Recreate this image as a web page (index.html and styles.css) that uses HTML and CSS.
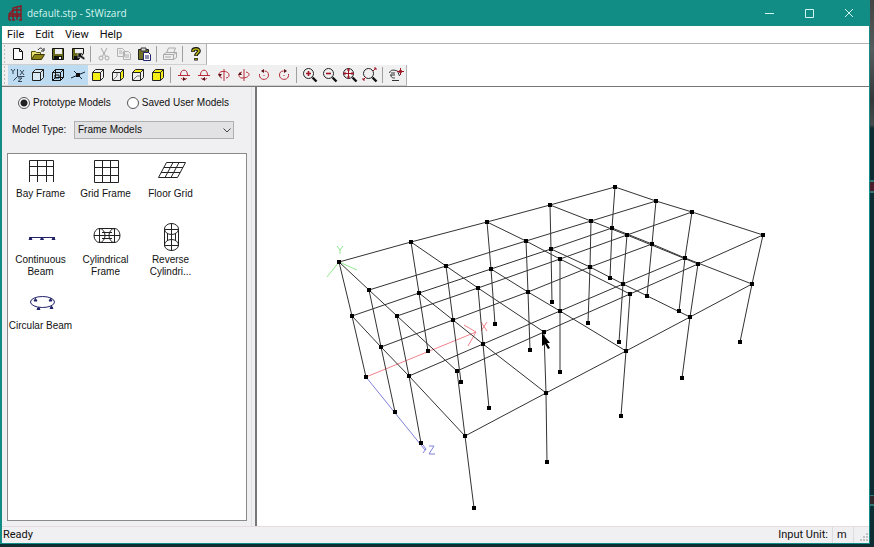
FILE: index.html
```html
<!DOCTYPE html>
<html lang="en">
<head>
<meta charset="utf-8">
<title>default.stp - StWizard</title>
<link rel="stylesheet" href="styles.css">
</head>
<body>
<svg class="defs" aria-hidden="true">
  <symbol id="cube" viewBox="0 0 16 16">
    <path d="M2.500 5.500h8v8h-8zM2.500 5.500l3-3h8v8l-3 3M10.500 5.500l3-3"/>
  </symbol>
  <symbol id="lens" viewBox="0 0 16 16">
    <circle cx="6.500" cy="6.500" r="5" fill="none" stroke="#222"/>
    <path d="M10.500 10.500l4 4" stroke="#111" stroke-width="2.400" fill="none"/>
  </symbol>
</svg>
<div class="window">
  <header class="titlebar">
    <svg class="app-icon" viewBox="0 0 16 16"><path d="M2 15V9l4-4V3l8-2v14M2 9h12M6 5h8M6 15V5M10 15V2M2 11h12M2 15h2M5 15h3M12 15h3" fill="none" stroke="#8c1622" stroke-width="1.400"/></svg>
    <h1>default.stp - StWizard</h1>
    <button class="win-btn" aria-label="Minimize"><svg viewBox="0 0 10 10"><path d="M1 5.500h9"/></svg></button>
    <button class="win-btn" aria-label="Maximize"><svg viewBox="0 0 10 10"><path d="M1.500 1.500h8v8h-8z"/></svg></button>
    <button class="win-btn" aria-label="Close"><svg viewBox="0 0 10 10"><path d="M1 1l8 8M9 1l-8 8"/></svg></button>
  </header>
  <nav class="menubar">
    <button>File</button><button>Edit</button><button>View</button><button>Help</button>
  </nav>
  <div class="toolbars">
    <div class="toolbar">
      <button aria-label="New"><svg viewBox="0 0 16 16"><path d="M3.500 2.500h6l3 3v8h-9zM9.500 2.500v3h3" fill="#fff" stroke="#111"/></svg></button>
      <button aria-label="Open"><svg viewBox="0 0 16 16"><path d="M1.500 13V5.500h4l1 1h4V8" fill="#e8e070" stroke="#55500a"/><path d="M1.500 13.500l3-5h10l-3 5z" fill="#8d8515" stroke="#38340a"/><path d="M8 4c2-3 4-2 5 0M14 2v3h-3" fill="none" stroke="#222"/></svg></button>
      <button aria-label="Save"><svg viewBox="0 0 16 16"><path d="M2.500 2.500h11v11h-11z" fill="#69691b" stroke="#111"/><path d="M5 3h7v5H5z" fill="#eee"/><path d="M4 10h8v4H4z" fill="#111"/><path d="M9 11h2v2H9z" fill="#fff"/></svg></button>
      <button aria-label="Save and exit"><svg viewBox="0 0 16 16"><path d="M2.500 2.500h11v5l-5 6h-6z" fill="#69691b" stroke="#111"/><path d="M5 3h8v4H5z" fill="#eee"/><path d="M4 10h5v4H4z" fill="#111"/><path d="M8 12V7h5l-2 2 4 3-1 2-4-3z" fill="#111" stroke="#ddd" stroke-width=".6"/></svg></button>
      <i class="sep"></i>
      <button aria-label="Cut"><svg viewBox="0 0 16 16"><path d="M5 2l5 9M11 2l-5 9" fill="none" stroke="#aaa"/><circle cx="5" cy="12" r="2" fill="none" stroke="#aaa"/><circle cx="11" cy="12" r="2" fill="none" stroke="#aaa"/></svg></button>
      <button aria-label="Copy"><svg viewBox="0 0 16 16"><path d="M1.500 2.500h5l2 2v6h-7zM7.500 5.500h5l2 2v6h-7zM3 5h3M3 7h4M9 9h4M9 11h4" fill="#eee" stroke="#b2b2b2"/></svg></button>
      <button aria-label="Paste"><svg viewBox="0 0 16 16"><path d="M2.500 3.500h10v10h-10z" fill="#737327" stroke="#222"/><path d="M5 2h5v3H5z" fill="#ddd" stroke="#333"/><path d="M7.500 6.500h5l2 2v6h-7z" fill="#fff" stroke="#22226f"/><path d="M9 10h4M9 12h4" stroke="#22226f"/></svg></button>
      <i class="sep"></i>
      <button aria-label="Print"><svg viewBox="0 0 16 16"><path d="M4.500 7l2-5h7l-2 5M1.500 8.500l3-2h10v5l-3 2h-10zM1.500 8.500h10v5M11.500 8.500l3-2M3 11h6" fill="#eee" stroke="#aaa"/></svg></button>
      <i class="sep"></i>
      <button aria-label="About"><svg viewBox="0 0 16 16"><path d="M5 6V4.500C5 2 11 2 11 5 11 7 8 7 8 10M8 12v2.500" fill="none" stroke="#111" stroke-width="3.600"/><path d="M5 5.500V4.500C5 2.500 11 2.500 11 5 11 7 8 7 8 9.500M8 12.500v1.500" fill="none" stroke="#b6b312" stroke-width="1.600"/></svg></button>
    </div>
    <div class="toolbar">
      <button class="on" aria-label="Axes"><svg viewBox="0 0 16 16"><path d="M7.500 2v7.500h7M7.500 9.500l-4 4M1 2l2 2.500L5 2M3 4.500V7M10 3l4 5M14 3l-4 5M8 11h4l-4 3.500h4" fill="none" stroke="#345"/></svg></button>
      <button class="on" aria-label="Outline"><svg viewBox="0 0 16 16" fill="#d7e9f5" stroke="#222"><use href="#cube"/></svg></button>
      <button class="on" aria-label="Wireframe"><svg viewBox="0 0 16 16" fill="none" stroke="#111"><use href="#cube"/><path d="M5.500 2.500v8h8M5.500 10.500l-3 3M5 8h4v3H5z"/></svg></button>
      <button class="on" aria-label="Nodes"><svg viewBox="0 0 16 16"><path d="M1 11l14-6M4 4l8 8" fill="none" stroke="#123"/><path d="M6 6h4v4H6z" fill="#111"/></svg></button>
      <button aria-label="Front view"><svg viewBox="0 0 16 16" fill="none" stroke="#222"><path d="M3 6h7v7H3z" fill="#f2ee16" stroke="none"/><use href="#cube"/></svg></button>
      <button aria-label="Side view"><svg viewBox="0 0 16 16" fill="none" stroke="#222"><path d="M10.500 5.500l3-3v8l-3 3z" fill="#f2ee16" stroke="none"/><use href="#cube"/><path d="M3 13l4-4V6" stroke="#777"/></svg></button>
      <button aria-label="Top view"><svg viewBox="0 0 16 16" fill="none" stroke="#222"><path d="M2.500 5.500l3-3h8l-3 3z" fill="#f2ee16" stroke="none"/><use href="#cube"/><path d="M3 13l4-4h3" stroke="#777"/></svg></button>
      <button aria-label="Isometric view"><svg viewBox="0 0 16 16" fill="#f2ee16" stroke="#222"><use href="#cube"/></svg></button>
      <i class="sep"></i>
      <button aria-label="Rotate up"><svg viewBox="0 0 16 16" class="rot"><path d="M2 8.500h12M4.500 8C4.500 1.500 11.500 1.500 11.500 8M5 11c1 2 5 2 6 0"/><path class="tip" d="M7 10v4l3-2z"/></svg></button>
      <button aria-label="Rotate down"><svg viewBox="0 0 16 16" class="rot"><path d="M2 8.500h12M4.500 8C4.500 1.500 11.500 1.500 11.500 8M5 11c1 2 5 2 6 0"/><path class="tip" d="M9 10v4l-3-2z"/></svg></button>
      <button aria-label="Rotate left"><svg viewBox="0 0 16 16" class="rot"><path d="M8 2v12M6 4.500C2 5 2 10 6 11M6 4.500c8-1 9 6 4 6.500"/><path class="tip" d="M2 7h4L4 10z"/></svg></button>
      <button aria-label="Rotate right"><svg viewBox="0 0 16 16" class="rot"><path d="M8 2v12M6 5C2 6 2 11 6 11M10 5c5 1 4 6-4 6"/><path class="tip" d="M2 8h4L4 5z"/></svg></button>
      <button aria-label="Spin left"><svg viewBox="0 0 16 16" class="rot"><path d="M3.500 7c-1 7 9 7 9 1 0-2-1-4-4-4M8 8v1"/><path class="tip" d="M8 2v4L5 4z"/></svg></button>
      <button aria-label="Spin right"><svg viewBox="0 0 16 16" class="rot"><path d="M12.500 7c1 7-9 7-9 1 0-2 1-4 4-4M8 8v1"/><path class="tip" d="M8 2v4l3-2z"/></svg></button>
      <i class="sep"></i>
      <button aria-label="Zoom in"><svg viewBox="0 0 16 16"><use href="#lens"/><path d="M4 6.500h5M6.500 4v5" stroke="#a01525" stroke-width="1.600"/></svg></button>
      <button aria-label="Zoom out"><svg viewBox="0 0 16 16"><use href="#lens"/><path d="M4 6.500h5" stroke="#a01525" stroke-width="1.600"/></svg></button>
      <button aria-label="Zoom extents"><svg viewBox="0 0 16 16"><use href="#lens"/><path d="M1 6.500h11M6.500 1v11" stroke="#a01525"/><path d="M3 5v3M10 5v3M5 3h3M5 10h3" stroke="#a01525"/></svg></button>
      <button aria-label="Zoom window"><svg viewBox="0 0 16 16"><use href="#lens"/><path d="M11 4l3-3M12 1h2v2M4 10l-3 3M1 11v2h2" stroke="#a01525" fill="none"/></svg></button>
      <i class="sep"></i>
      <button aria-label="Pan"><svg viewBox="0 0 16 16"><path d="M1.500 6c1-4 5-3 8-2l2 5M3 6h4M2 8h5M3 8c0 3 2 3 4 3M4 13.500h7" fill="none" stroke="#333"/><path d="M12.500 1v7M9 4.500h7M11.500 3.500h2v2h-2z" fill="none" stroke="#a01525"/></svg></button>
    </div>
  </div>
  <main class="workspace">
    <aside class="panel">
      <div class="radios">
        <label><input type="radio" name="source" checked>Prototype Models</label>
        <label><input type="radio" name="source">Saved User Models</label>
      </div>
      <div class="type-row">
        <label for="model-type">Model Type:</label>
        <div class="select-box">
          <select id="model-type"><option>Frame Models</option></select>
          <svg viewBox="0 0 8 5"><path d="M.5.5L4 4 7.500.5" fill="none" stroke="#444"/></svg>
        </div>
      </div>
      <ul class="models">
        <li><svg viewBox="0 0 32 28"><path d="M4.500 25V3.500h24V25M4 9.500h25M4 18.500h25M12.500 3v22M21.500 3v22"/></svg>Bay Frame</li>
        <li><svg viewBox="0 0 32 28"><path d="M4.500 3.500h24v22h-24zM4 10.500h25M4 18.500h25M12.500 3v23M20.500 3v23"/></svg>Grid Frame</li>
        <li><svg viewBox="0 0 32 28"><path d="M11.500 5.500h19l-8 15h-19zM9 10.500h19M6 15.500h19M18 5.500l-8 15M24 5.500l-8 15"/></svg>Floor Grid</li>
        <li><svg viewBox="0 0 32 28" class="navy"><path d="M4 14.500h26"/><path d="M4 16.500L5.500 14l1.500 2.500zM15.500 16.500L17 14l1.500 2.500zM27 16.500l1.500-2.500 1.500 2.500z" fill="#22226a"/></svg>Continuous<br>Beam</li>
        <li><svg viewBox="0 0 32 28"><path d="M9 5.500h16M9 19.500h16M4 12.500h26M12 9.500h10M12 15.500h10M9.500 5v15M24.500 5v15"/><ellipse cx="9.500" cy="12.500" rx="5.500" ry="7"/><ellipse cx="24.500" cy="12.500" rx="5.500" ry="7"/></svg>Cylindrical<br>Frame</li>
        <li><svg viewBox="0 0 32 28"><path d="M9.500 6v16M23.500 6v16M16.500 0v28M9 6.500h15M9 22.500h15M12.500 10v8M20.500 10v8"/><ellipse cx="16.500" cy="6" rx="7" ry="5.500"/><ellipse cx="16.500" cy="22" rx="7" ry="5.500"/></svg>Reverse<br>Cylindri...</li>
        <li><svg viewBox="0 0 32 28" class="navy"><ellipse cx="17.500" cy="13" rx="12" ry="5.500"/><path d="M9 12l1.500-2.500L12 12zM24 12l1.500-2.500L27 12zM12 20.500l1.500-2.500 1.500 2.500zM25 19.500l1.500-2.500 1.500 2.500z" fill="#22226a"/></svg>Circular Beam</li>
      </ul>
    </aside>
    <section class="view" aria-label="Model view">
      <svg viewBox="257 87 612 439" preserveAspectRatio="xMidYMid meet">
        <defs><marker id="node" markerUnits="userSpaceOnUse" markerWidth="4" markerHeight="4" refX="2" refY="2"><path d="M0 0h4v4H0z" fill="#000"/></marker></defs>
        <g fill="none" stroke="#f0828c">
          <path d="M366 377L476 332M464 325l12 7-8 14M481 322l6 9M487 322l-6 9"/>
        </g>
        <g fill="none" stroke="#8fe88f"><path d="M327 277l12-15 18 8M337 246l3 4 3-4M340 250v4"/></g>
        <g fill="none" stroke="#8080dc"><path d="M366 377L425 450M423 453l3-4-3-4M429 446h5l-5 8h6"/></g>
        <!-- members along x, roof then mid level -->
        <g class="member">
          <path d="M339 262L411 242 487 222 550 205 615 187"/>
          <path d="M369 290L446 266 526 241 591 221 656 201"/>
          <path d="M397 316L478 288 560 259 627 235 692 212"/>
          <path d="M457 371L544 332 630 294 698 264 763 235"/>
          <path d="M352 316L419 293 491 269 551 249 612 228"/>
          <path d="M381 347L453 320 528 292 590 267 652 244"/>
          <path d="M409 376L483 344 560 311 623 284 685 258"/>
          <path d="M465 436L546 393 626 351 690 317 752 284"/>
        </g>
        <!-- members along z, roof then mid level -->
        <g class="member">
          <path d="M339 262L369 290 397 316 457 371"/>
          <path d="M411 242L446 266 478 288 544 332"/>
          <path d="M487 222L526 241 560 259 630 294"/>
          <path d="M550 205L591 221 627 235 698 264"/>
          <path d="M615 187L656 201 692 212 763 235"/>
          <path d="M352 316L381 347 409 376 465 436"/>
          <path d="M419 293L453 320 483 344 546 393"/>
          <path d="M491 269L528 292 560 311 626 351"/>
          <path d="M551 249L590 267 623 284 690 317"/>
          <path d="M612 228L652 244 685 258 752 284"/>
        </g>
        <!-- columns, roof to base -->
        <g class="member column">
          <path d="M339 262L352 316 366 377"/><path d="M411 242L419 293 428 351"/><path d="M487 222L491 269 495 324"/><path d="M550 205L551 249 552 302"/><path d="M615 187L612 228 610 278"/>
          <path d="M369 290L381 347 395 412"/><path d="M446 266L453 320 461 382"/><path d="M526 241L528 292 530 350"/><path d="M591 221L590 267 588 323"/><path d="M656 201L652 244 647 296"/>
          <path d="M397 316L409 376 421 443"/><path d="M478 288L483 344 489 408"/><path d="M560 259L560 311 560 372"/><path d="M627 235L623 284 619 342"/><path d="M692 212L685 258 679 311"/>
          <path d="M457 371L465 436 474 508"/><path d="M544 332L546 393 547 462"/><path d="M630 294L626 351 621 416"/><path d="M698 264L690 317 682 378"/><path d="M763 235L752 284 740 342"/>
        </g>
        <path d="M542 333v13l3-2 3 5 2-1-3-5h3z" fill="#000"/>
      </svg>
    </section>
  </main>
  <footer class="status"><span class="ready">Ready</span><span>Input Unit:</span><span class="unit">m</span>
    <svg class="grip" viewBox="0 0 8 8"><path d="M6 0h2v2H6zM3 3h2v2H3zM6 3h2v2H6zM0 6h2v2H0zM3 6h2v2H3zM6 6h2v2H6z" fill="#c4c4c4"/></svg>
  </footer>
</div>
</body>
</html>
```
FILE: styles.css
```css
* { box-sizing: border-box; }

body {
  margin: 0;
  height: 100vh;
  padding: 0 4px 3px 0;
  background:
    linear-gradient(#0000 180px, #2f7573 180px, #2f7573 182px, #4a1c2c 182px, #4a1c2c 191px, #2f7573 191px, #2f7573 193px, #0000 193px),
    linear-gradient(#0000 495px, #2f7573 495px, #2f7573 496px, #30262b 496px, #30262b 504px, #2f7573 504px, #2f7573 506px, #0000 506px),
    linear-gradient(#444 0, #555a5c 50px, #34383a 100px, #454b4d 125px, #102c33 128px, #102c33 100%);
  font: 10px/14px "Liberation Sans", sans-serif;
  color: #111;
}

button {
  border: 0;
  padding: 0;
  background: none;
  font: inherit;
  color: inherit;
}

svg { display: block; }
.defs { position: absolute; width: 0; height: 0; }

.window {
  display: flex;
  flex-direction: column;
  height: 100%;
  border: solid #128d85;
  border-width: 0 1px 1px 2px;
  background: #fff;
}

.titlebar {
  display: flex;
  align-items: center;
  height: 26px;
  padding-left: 5px;
  background: #128d85;
  color: #d4f5f0;
}
.app-icon { width: 16px; height: 16px; margin-right: 4px; }
.titlebar h1 {
  flex: 1;
  margin: 0;
  font: 10px/14px "Open Sans", sans-serif;
}
.win-btn { display: grid; place-items: center; width: 40px; height: 26px; }
.win-btn svg { width: 10px; height: 10px; fill: none; stroke: #d4f5f0; }

.menubar {
  display: flex;
  gap: 11px;
  height: 18px;
  padding-left: 5px;
  border-bottom: 1px solid #b4b4b4;
  font: 11px/16px Roboto, sans-serif;
}

.toolbars { border-bottom: 1px solid #777; }
.toolbar {
  display: flex;
  align-items: center;
  width: max-content;
  height: 21px;
  padding-left: 6px;
  border-right: 1px solid #b0b0b0;
  border-bottom: 1px solid #d0d0d0;
  background: radial-gradient(circle, #bbb 1px, #0000 1px) 1px 0 / 3px 4px repeat-y, #f0f0f0;
}
.toolbar button { display: grid; place-items: center; width: 20px; height: 20px; }
.toolbar button.on { background: #bddcf1; }
.toolbar svg { width: 16px; height: 16px; }
.rot { fill: none; stroke: #b82a38; }
.rot .tip { fill: #5a1018; stroke: none; }
.sep { width: 1px; height: 16px; margin: 0 3px 0 2px; background: #a0a0a0; }

.workspace {
  flex: 1;
  min-height: 0;
  display: flex;
  background: #f0eff2;
}

.panel {
  display: flex;
  flex-direction: column;
  width: 250px;
  padding: 8px 4px 5px 5px;
  border-right: 1px solid #e0e0e0;
}
.radios { display: flex; gap: 16px; padding-left: 11px; white-space: nowrap; }
.radios label { display: flex; align-items: center; gap: 3px; height: 16px; }
.radios input {
  appearance: none;
  width: 12px;
  height: 12px;
  margin: 0;
  border: 1px solid #555;
  border-radius: 50%;
  background: #fff;
}
.radios input:checked { background: radial-gradient(circle, #222 3px, #fff 4px); }

.type-row {
  display: flex;
  align-items: center;
  justify-content: space-between;
  margin: 10px 13px 14px 5px;
}
.select-box { position: relative; width: 160px; }
.select-box select {
  appearance: none;
  display: block;
  width: 100%;
  height: 18px;
  padding: 0 3px;
  border: 1px solid #b0b0b0;
  border-radius: 0;
  background: #e2e1e4;
  font: inherit;
  color: inherit;
}
.select-box svg { position: absolute; right: 3px; top: 7px; width: 8px; height: 5px; }

.models {
  flex: 1;
  display: grid;
  grid-template-columns: repeat(3, 65px);
  grid-template-rows: 66px 66px 50px;
  align-content: start;
  margin: 0;
  padding: 3px 0 0;
  border: 1px solid #8a8a8a;
  background: #fff;
  list-style: none;
  text-align: center;
}
.models svg {
  width: 32px;
  height: 28px;
  margin: 0 auto 3px;
  fill: none;
  stroke: #222;
}
.models .navy { stroke: #22226a; }
.models li { line-height: 12px; white-space: nowrap; }

.view {
  flex: 1;
  min-width: 0;
  margin-left: 3px;
  border-left: 2px solid #777;
  background: #fff;
}
.view svg { width: 100%; height: 100%; }
.member { fill: none; stroke: #333; }
.column path {
  marker-start: url(#node);
  marker-mid: url(#node);
  marker-end: url(#node);
}

.status {
  display: flex;
  align-items: center;
  height: 17px;
  padding-left: 1px;
  border-top: 1px solid #e4dcdf;
  background: #f0eff1;
  font: 11px/16px Roboto, sans-serif;
}
.ready { flex: 1; }
.unit { width: 22px; margin-left: 4px; padding-left: 4px; border-left: 1px solid #ddd; border-right: 1px solid #ddd; }
.grip { width: 8px; height: 8px; margin: 4px 1px 0 6px; }
```
